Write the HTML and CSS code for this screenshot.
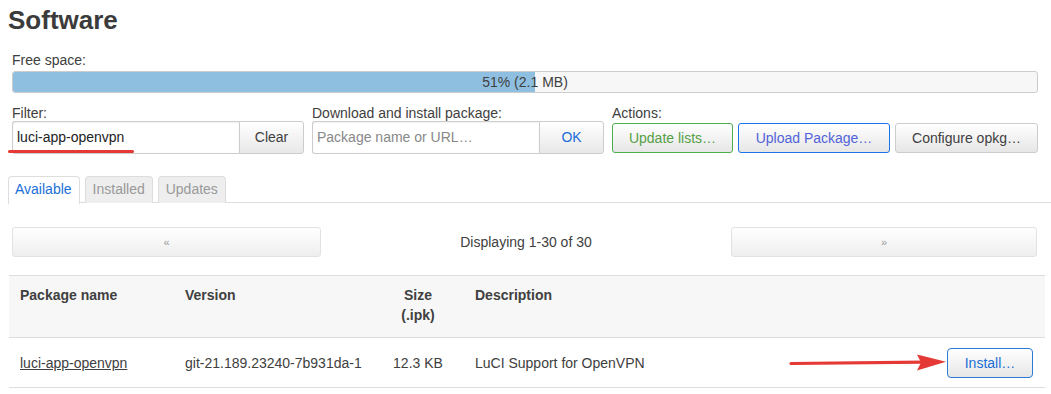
FILE: index.html
```html
<!DOCTYPE html>
<html>
<head>
<meta charset="utf-8">
<link rel="stylesheet" href="styles.css">
</head>
<body>
<div class="page">
  <h2 class="title">Software</h2>

  <div class="free">
    <div class="label">Free space:</div>
    <div class="bar">
      <div class="bar-fill" style="width:51%"></div>
      <div class="bar-text">51% (2.1 MB)</div>
    </div>
  </div>

  <div class="controls">
    <div class="group g-filter">
      <div class="label">Filter:</div>
      <div class="combo">
        <div class="field">luci-app-openvpn</div>
        <div class="addon">Clear</div>
        <div class="mark"></div>
      </div>
    </div>
    <div class="group g-dl">
      <div class="label">Download and install package:</div>
      <div class="combo">
        <div class="field placeholder">Package name or URL…</div>
        <div class="addon ok">OK</div>
      </div>
    </div>
    <div class="group g-actions">
      <div class="label">Actions:</div>
      <div class="actions">
        <div class="btn btn-green">Update lists…</div>
        <div class="btn btn-blue">Upload Package…</div>
        <div class="btn btn-plain">Configure opkg…</div>
      </div>
    </div>
  </div>

  <div class="tabs">
    <div class="tab active">Available</div>
    <div class="tab">Installed</div>
    <div class="tab">Updates</div>
  </div>

  <div class="pager">
    <div class="pbtn pbtn-l">«</div>
    <div class="ptext">Displaying 1-30 of 30</div>
    <div class="pbtn pbtn-r">»</div>
  </div>

  <div class="table">
    <div class="tr th">
      <div class="c-name">Package name</div>
      <div class="c-ver">Version</div>
      <div class="c-size">Size<br>(.ipk)</div>
      <div class="c-desc">Description</div>
      <div class="c-act"></div>
    </div>
    <div class="tr td">
      <div class="c-name"><span class="link">luci-app-openvpn</span></div>
      <div class="c-ver">git-21.189.23240-7b931da-1</div>
      <div class="c-size">12.3 KB</div>
      <div class="c-desc">LuCI Support for OpenVPN</div>
      <div class="c-act">
        <svg class="arrow" width="160" height="20" viewBox="0 0 160 20">
          <path d="M2 10.5 L134 9.2" stroke="#e53935" stroke-width="3.2" stroke-linecap="round" fill="none"/>
          <path d="M128 1.5 L157 8.8 L128 17.5 L132 9.4 Z" fill="#e53935"/>
        </svg>
        <div class="btn btn-install">Install…</div>
      </div>
    </div>
  </div>
</div>
</body>
</html>
```

FILE: styles.css
```css
* { box-sizing: border-box; }
html, body { margin: 0; padding: 0; background: #fff; }
body {
  font-family: "Liberation Sans", Arial, sans-serif;
  font-size: 14px;
  color: #404040;
}
.page { padding: 0 6px 0 8px; }
.title {
  margin: 0;
  padding-top: 4px;
  font-size: 26px;
  line-height: 32px;
  font-weight: bold;
  color: #3b3b3b;
}
.label { line-height: 16px; color: #404040; }
.free { padding: 16px 7px 0 4px; }
.free .label { margin-bottom: 3px; }
.bar {
  position: relative;
  height: 22px;
  border: 1px solid #ccc;
  border-radius: 3px;
  background: #f7f7f7;
  overflow: hidden;
}
.bar-fill { height: 100%; background: #8fbfe0; }
.bar-text {
  position: absolute; left: 0; right: 0; top: 0;
  text-align: center; line-height: 20px; color: #404040;
}
.controls {
  display: flex;
  gap: 8px;
  padding: 12px 7px 0 4px;
}
.group .label { margin-bottom: 0; white-space: nowrap; }
.g-filter, .g-dl { width: 292px; flex: 0 0 292px; }
.g-actions { flex: 1 1 auto; min-width: 0; }
.combo { display: flex; height: 33px; position: relative; }
.field {
  flex: 1;
  min-width: 0;
  border: 1px solid #ccc;
  border-right: none;
  border-radius: 3px 0 0 3px;
  padding: 0 4px;
  line-height: 31px;
  color: #222;
  white-space: nowrap;
  overflow: hidden;
  box-shadow: inset 0 1px 2px rgba(0,0,0,0.06);
}
.field.placeholder { color: #888; }
.addon {
  flex: 0 0 65px;
  border: 1px solid #ccc;
  border-radius: 0 3px 3px 0;
  background: linear-gradient(#fff, #e8e8e8);
  text-align: center;
  line-height: 31px;
  color: #404040;
}
.addon.ok { color: #1a6fd6; }
.mark {
  position: absolute;
  left: -4px; top: 29px;
  width: 126px; height: 3px;
  border-radius: 2px;
  background: #e53935;
}
.actions { display: flex; gap: 5px; padding-top: 2px; }
.btn {
  height: 30px;
  border: 1px solid #ccc;
  border-radius: 3px;
  background: linear-gradient(#fff, #e6e6e6);
  text-align: center;
  line-height: 28px;
  white-space: nowrap;
  flex: 0 0 auto;
}
.btn-green { width: 121px; border-color: #4cae4c; color: #55a048; }
.btn-blue { width: 152px; border-color: #1a73e8; color: #5263d8; }
.btn-plain { width: 143px; color: #404040; }

.tabs {
  display: flex;
  gap: 5px;
  margin-top: 22px;
  border-bottom: 1px solid #ddd;
  margin-right: -6px;
  height: 27px;
}
.tab {
  height: 27px;
  padding: 0 7px;
  border: 1px solid #ddd;
  border-bottom: none;
  border-radius: 4px 4px 0 0;
  background: #eee;
  color: #999;
  line-height: 25px;
}
.tab.active {
  background: #fff;
  color: #1a6fd6;
  height: 28px;
  padding: 0 7px 0 6px;
}

.pager {
  display: flex;
  align-items: center;
  padding: 24px 8px 0 4px;
}
.pbtn {
  height: 30px;
  border: 1px solid #e2e2e2;
  border-radius: 3px;
  background: linear-gradient(#fff, #eee);
  text-align: center;
  line-height: 28px;
  color: #999;
  font-size: 11px;
}
.pbtn-l { width: 309px; }
.pbtn-r { width: 306px; }
.ptext { flex: 1; text-align: center; color: #404040; }

.table {
  margin: 18px 0 0 1px;
  width: 1036px;
}
.tr {
  display: flex;
  border-top: 1px solid #ddd;
}
.th {
  background: #f7f7f7;
  font-weight: bold;
  height: 62px;
  padding-top: 9px;
  line-height: 20px;
}
.td {
  height: 51px;
  align-items: center;
  border-bottom: 1px solid #ddd;
}
.c-name { width: 176px; padding-left: 11px; }
.c-ver { width: 195px; }
.c-size { width: 94px; padding-right: 18px; text-align: center; }
.c-desc { width: 180px; padding-left: 1px; white-space: nowrap; }
.c-act { flex: 1; display: flex; align-items: center; justify-content: flex-end; padding-right: 12px; }
.link { text-decoration: underline; color: #404040; }
.btn-install {
  width: 86px; height: 30px;
  border-color: #2a7ad6;
  border-radius: 4px;
  color: #1a6fd6;
  line-height: 28px;
}
.arrow { margin-right: -2px; }
```
